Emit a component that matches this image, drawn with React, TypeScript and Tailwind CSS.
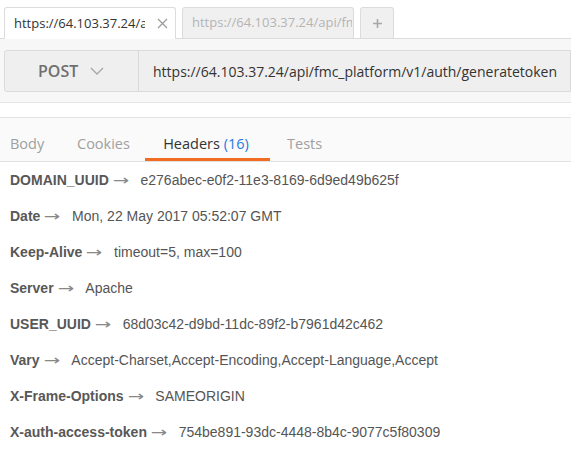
import React from "react";

const headers: [string, string][] = [
  ["DOMAIN_UUID", "e276abec-e0f2-11e3-8169-6d9ed49b625f"],
  ["Date", "Mon, 22 May 2017 05:52:07 GMT"],
  ["Keep-Alive", "timeout=5, max=100"],
  ["Server", "Apache"],
  ["USER_UUID", "68d03c42-d9bd-11dc-89f2-b7961d42c462"],
  ["Vary", "Accept-Charset,Accept-Encoding,Accept-Language,Accept"],
  ["X-Frame-Options", "SAMEORIGIN"],
  ["X-auth-access-token", "754be891-93dc-4448-8b4c-9077c5f80309"],
];

export default function App() {
  return (
    <div className="w-[571px] h-[451px] overflow-hidden bg-white font-['Open_Sans',sans-serif]">
      {/* request tabs */}
      <div className="flex items-end gap-[6px] pl-[4px] pt-[7px] h-[38px]">
        <div className="relative z-10 flex items-center w-[172px] h-[32px] -mb-px bg-white border border-b-0 border-[#dcdcdc] rounded-t-[3px] pl-[9px]">
          <span className="w-[131px] overflow-hidden whitespace-nowrap text-[13px] text-[#333]">https://64.103.37.24/a</span>
          <svg className="ml-[12px]" width="11" height="11" viewBox="0 0 11 11" fill="none">
            <path d="M1 1l9 9M10 1l-9 9" stroke="#9a9a9a" strokeWidth="1.2" />
          </svg>
        </div>
        <div className="flex items-center w-[172px] h-[31px] bg-[#f0f0f0] border border-b-0 border-[#dcdcdc] rounded-t-[3px] pl-[9px]">
          <span className="w-[160px] overflow-hidden whitespace-nowrap text-[13px] text-[#b4b4b4]">https://64.103.37.24/api/fm</span>
        </div>
        <div className="flex items-center justify-center w-[34px] h-[31px] bg-[#f0f0f0] border border-b-0 border-[#dcdcdc] rounded-t-[3px]">
          <svg width="11" height="11" viewBox="0 0 11 11">
            <path d="M5.5 1v9M1 5.5h9" stroke="#a8a8a8" strokeWidth="1.6" />
          </svg>
        </div>
      </div>

      {/* url bar */}
      <div className="h-[65px] bg-[#f7f7f7] border-t border-[#dcdcdc] border-b border-b-[#e6e6e6] pt-[11px] pl-[4px]">
        <div className="flex h-[42px] border border-[#dadada] rounded-l-[3px] bg-[#efefef]">
          <div className="flex shrink-0 items-center w-[134px] border-r border-[#dadada] pl-[33px]">
            <span className="text-[16px] font-semibold text-[#707070]">POST</span>
            <svg className="ml-[12px]" width="14" height="8" viewBox="0 0 14 8" fill="none">
              <path d="M1 1l6 6 6-6" stroke="#a8a8a8" strokeWidth="1.4" />
            </svg>
          </div>
          <div className="flex items-center pl-[14px] text-[14px] text-[#333] whitespace-nowrap">
            https://64.103.37.24/api/fmc_platform/v1/auth/generatetoken
          </div>
        </div>
      </div>

      <div className="h-[15px] bg-white border-b border-[#e4e4e4]" />

      {/* response tabs */}
      <div className="flex h-[44px] pt-[8px] bg-[#fafafa] border-b border-[#e2e2e2] text-[14.5px]">
        <div className="flex items-center pl-[10px] w-[77px] text-[#a0a0a0]">Body</div>
        <div className="flex items-center w-[68px] text-[#a0a0a0]">Cookies</div>
        <div className="relative flex items-center justify-center w-[125px] pr-[3px] text-[#333]">
          <span>Headers <span className="text-[#1f7ae6]">(16)</span></span>
          <div className="absolute left-0 right-0 bottom-0 h-[3px] bg-[#f26b22]" />
        </div>
        <div className="flex items-center ml-[17px] text-[#a0a0a0]">Tests</div>
      </div>

      {/* header list */}
      <div className="flex flex-col pl-[10px] font-['Liberation_Sans',Arial,sans-serif] text-[14px] text-[#555]">
        {headers.map(([k, v]) => (
          <div key={k} className="flex items-center h-[36px] whitespace-nowrap">
            <span className="font-bold text-[#585858]">{k}</span>
            <span className="inline-block ml-[6px] mr-[14px] scale-x-[1.4] font-['DejaVu_Sans',sans-serif] text-[14px] leading-none text-[#888]">→</span>
            <span>{v}</span>
          </div>
        ))}
      </div>
    </div>
  );
}
